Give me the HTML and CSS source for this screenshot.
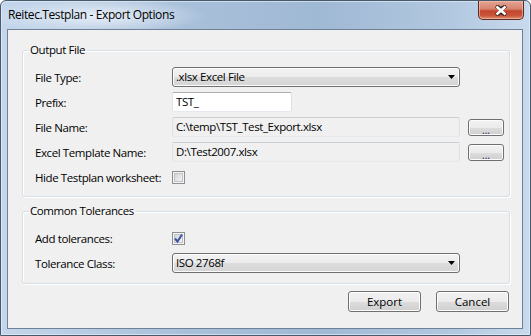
FILE: index.html
```html
<!DOCTYPE html>
<html>
<head>
    <meta charset="UTF-8">
    <title>Reitec.Testplan - Export Options</title>
    <link rel="stylesheet" href="styles.css">
</head>
<body>
    <div class="window">
        <div class="titlebar">
            <span class="title">Reitec.Testplan - Export Options</span>
            <div class="close">
                <svg width="16" height="11" viewBox="0 0 16 11">
                    <path d="M3 1 L8 4 L13 1 M3 10 L8 7 L13 10" fill="none" stroke="#3b2320" stroke-width="4" stroke-linejoin="round"/>
                    <path d="M3.5 1.5 L12.5 9.5 M12.5 1.5 L3.5 9.5" fill="none" stroke="#fff" stroke-width="2.4"/>
                </svg>
            </div>
        </div>
        <div class="client">
            <fieldset class="group output">
                <legend>Output File</legend>
                <div class="rows">
                    <label>File Type:</label>
                    <div class="combo">
                        <span>.xlsx Excel File</span>
                        <svg class="arrow" width="7" height="4" viewBox="0 0 7 4"><path d="M0 0 H7 L3.5 4 Z" fill="#000"/></svg>
                    </div>
                    <span></span>

                    <label>Prefix:</label>
                    <div class="cell"><div class="textbox prefix">TST_</div></div>
                    <span></span>

                    <label>File Name:</label>
                    <div class="textbox readonly">C:\temp\TST_Test_Export.xlsx</div>
                    <button class="browse">...</button>

                    <label>Excel Template Name:</label>
                    <div class="textbox readonly">D:\Test2007.xlsx</div>
                    <button class="browse">...</button>

                    <label>Hide Testplan worksheet:</label>
                    <div class="cell"><span class="check"></span></div>
                    <span></span>
                </div>
            </fieldset>

            <fieldset class="group tolerances">
                <legend>Common Tolerances</legend>
                <div class="rows">
                    <label>Add tolerances:</label>
                    <div class="cell">
                        <span class="check">
                            <svg width="11" height="11" viewBox="0 0 11 11"><path d="M2 5.5 L4.5 8.5 L9 1.5" fill="none" stroke="#3c53a3" stroke-width="2"/></svg>
                        </span>
                    </div>
                    <span></span>

                    <label>Tolerance Class:</label>
                    <div class="combo">
                        <span>ISO 2768f</span>
                        <svg class="arrow" width="7" height="4" viewBox="0 0 7 4"><path d="M0 0 H7 L3.5 4 Z" fill="#000"/></svg>
                    </div>
                    <span></span>
                </div>
            </fieldset>

            <div class="actions">
                <button class="btn">Export</button>
                <button class="btn">Cancel</button>
            </div>
        </div>
    </div>
</body>
</html>
```

FILE: styles.css
```css
*{
    box-sizing:border-box;
}
body{
    margin:0;
    font-family:"Open Sans", sans-serif;
    font-size:11.5px;
    letter-spacing:-0.4px;
    color:#000;
    background:#fff;
}
.window{
    width:531px;
    height:336px;
    border:solid 1px #49596c;
    border-radius:6px 6px 0 0;
    padding:0 7px 6px 6px;
    background:
        radial-gradient(ellipse 110px 18px at 95px 15px, #e6eef7 0%, #e6eef700 100%),
        linear-gradient(90deg, #c3d6eb 0%, #a9c0da 35%, #9fb8d4 60%, #b2c8e0 85%, #c8daed 100%);
    box-shadow:inset 0 0 0 1px #e4eef8aa;
}
.titlebar{
    height:28px;
    display:flex;
    justify-content:space-between;
    align-items:flex-start;
}
.title{
    font-size:12px;
    padding-top:6px;
    padding-left:1px;
    line-height:16px;
}
.close{
    width:46px;
    height:19px;
    margin-right:-1px;
    border:solid 1px #5a2a25;
    border-top:none;
    border-radius:0 0 5px 5px;
    background:linear-gradient(#e3a593 0%, #d6826c 45%, #c3442c 55%, #c9553a 80%, #df8d6a 100%);
    box-shadow:inset 0 0 0 1px #f2c0b0aa;
    display:flex;
    align-items:center;
    justify-content:center;
}
.client{
    height:300px;
    border:solid 1px #6f8196;
    background:#f0f0f0;
    padding:13px 12px 0 14px;
    display:flex;
    flex-direction:column;
}
.group{
    margin:0;
    border:solid 1px #d5dfe5;
    border-radius:3px;
    box-shadow:inset 1px 1px 0 #fff, 1px 1px 0 #fff;
    padding:10px 0 9px 12px;
}
.group legend{
    line-height:14px;
    padding:0 2px 0 1px;
    margin-left:-6px;
}
.tolerances{
    margin-top:7px;
    padding-top:10px;
    padding-bottom:10px;
}
.rows{
    display:grid;
    grid-template-columns:137px 288px 44px;
    grid-auto-rows:20px;
    row-gap:5px;
    align-items:center;
}
.cell{
    display:flex;
    align-items:center;
    height:20px;
}
.combo{
    height:20px;
    border:solid 1px #707070;
    border-radius:3px;
    background:linear-gradient(#f3f3f3 0%, #ebebeb 50%, #dddddd 51%, #d4d4d4 100%);
    box-shadow:inset 0 0 0 1px #fcfcfc;
    display:flex;
    align-items:center;
    justify-content:space-between;
    padding:0 4px 0 3px;
    line-height:18px;
}
.textbox{
    height:20px;
    line-height:18px;
    padding:0 3px;
    border:solid 1px #abadb3;
    border-color:#abadb3 #dbdfe6 #e3e9ef #e2e3ea;
    background:#fff;
    border-radius:2px;
}
.prefix{
    width:120px;
}
.readonly{
    background:#f0f0f0;
    border-color:#cbced3 #dde0e4 #e4e7eb #dde0e4;
}
.browse{
    justify-self:end;
    width:36px;
    height:17px;
    padding:0;
    font-family:inherit;
    font-size:10px;
    line-height:14px;
    color:#3b0a5e;
    border:solid 1px #707070;
    border-radius:3px;
    background:linear-gradient(#f2f2f2 0%, #ebebeb 50%, #dddddd 51%, #cfcfcf 100%);
    box-shadow:inset 0 0 0 1px #fcfcfc;
    padding-top:3px;
}
.check{
    width:13px;
    height:13px;
    border:solid 1px #8e8f8f;
    background:linear-gradient(135deg, #cbcfd5 0%, #e9e9ea 60%, #f4f4f4 100%);
    box-shadow:inset 0 0 0 1px #f4f4f4, inset 0 0 0 2px #c0c4ca;
    display:flex;
    align-items:center;
    justify-content:center;
}
.actions{
    display:flex;
    justify-content:flex-end;
    gap:15px;
    margin-top:7px;
    padding-right:1px;
}
.btn{
    width:73px;
    height:21px;
    padding:0;
    font-family:inherit;
    font-size:11.5px;
    line-height:18px;
    color:#000;
    border:solid 1px #707070;
    border-radius:3px;
    background:linear-gradient(#f2f2f2 0%, #ebebeb 50%, #dddddd 51%, #cfcfcf 100%);
    box-shadow:inset 0 0 0 1px #fcfcfc;
}
```
